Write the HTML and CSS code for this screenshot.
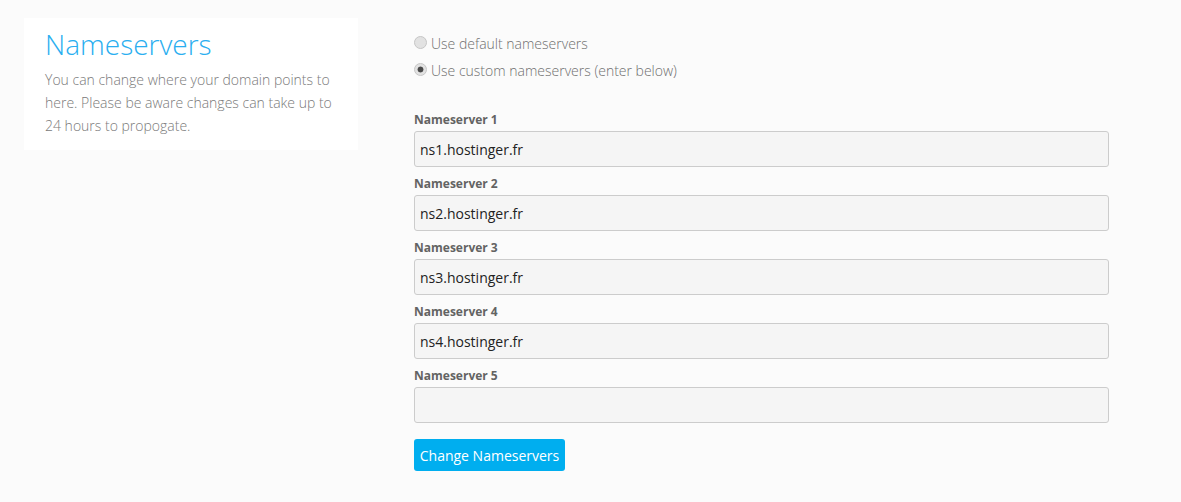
FILE: index.html
```html
<!DOCTYPE html>
<html>
<head>
<meta charset="utf-8">
<link rel="stylesheet" href="styles.css">
</head>
<body>
<div class="page">
  <div class="intro">
    <h1 class="intro-title">Nameservers</h1>
    <p class="intro-text">You can change where your domain points to here. Please be aware changes can take up to 24 hours to propogate.</p>
  </div>
  <form class="ns-form">
    <label class="radio-row"><span class="radio"></span>Use default nameservers</label>
    <label class="radio-row"><span class="radio checked"></span>Use custom nameservers (enter below)</label>
    <div class="fields">
      <div class="field">
        <div class="field-label">Nameserver 1</div>
        <div class="field-input">ns1.hostinger.fr</div>
      </div>
      <div class="field">
        <div class="field-label">Nameserver 2</div>
        <div class="field-input">ns2.hostinger.fr</div>
      </div>
      <div class="field">
        <div class="field-label">Nameserver 3</div>
        <div class="field-input">ns3.hostinger.fr</div>
      </div>
      <div class="field">
        <div class="field-label">Nameserver 4</div>
        <div class="field-input">ns4.hostinger.fr</div>
      </div>
      <div class="field">
        <div class="field-label">Nameserver 5</div>
        <div class="field-input"></div>
      </div>
    </div>
    <button type="button" class="btn-primary">Change Nameservers</button>
  </form>
</div>
</body>
</html>
```

FILE: styles.css
```css
html, body {
  margin: 0;
  padding: 0;
  background: #fbfbfb;
  font-family: "Open Sans", "Liberation Sans", sans-serif;
}

.page {
  display: flex;
  align-items: flex-start;
  padding: 18px 0 0 24px;
  gap: 56px;
}

.intro {
  width: 334px;
  box-sizing: border-box;
  background: #ffffff;
  padding: 9px 21px 13px 21px;
}

.intro-title {
  margin: 0;
  font-size: 28px;
  line-height: 34px;
  font-weight: 300;
  color: #29aef0;
}

.intro-text {
  margin: 7px 0 0 0;
  font-size: 14px;
  line-height: 23px;
  font-weight: 300;
  color: #7a7a7a;
}

.ns-form {
  width: 695px;
  padding-top: 12px;
  display: flex;
  flex-direction: column;
}

.radio-row {
  display: flex;
  align-items: center;
  height: 27px;
  font-size: 14px;
  font-weight: 300;
  color: #6f6f6f;
}

.radio {
  width: 11px;
  height: 11px;
  border-radius: 50%;
  border: 1px solid #c6c6c6;
  background: #e2e2e2;
  margin: 0 4px 0 0;
  position: relative;
  top: -1px;
  flex-shrink: 0;
}

.radio.checked {
  background: radial-gradient(circle, #4a4a4a 0, #4a4a4a 2.6px, #e2e2e2 3.3px);
}

.fields {
  margin-top: 26px;
  display: flex;
  flex-direction: column;
  gap: 7px;
}

.field-label {
  font-size: 12px;
  line-height: 18px;
  font-weight: 700;
  color: #636363;
  padding-top: 1px;
  margin-bottom: 2px;
}

.field-input {
  height: 36px;
  box-sizing: border-box;
  border: 1px solid #cccccc;
  border-radius: 3px;
  background: #f5f5f5;
  padding: 1px 5px 0 5px;
  font-size: 14px;
  line-height: 34px;
  color: #222222;
}

.btn-primary {
  align-self: flex-start;
  margin-top: 16px;
  width: 151px;
  height: 32px;
  border: none;
  border-radius: 3px;
  background: #00aeef;
  color: #ffffff;
  font-family: "Open Sans", "Liberation Sans", sans-serif;
  font-size: 14px;
  padding: 0;
}
```
